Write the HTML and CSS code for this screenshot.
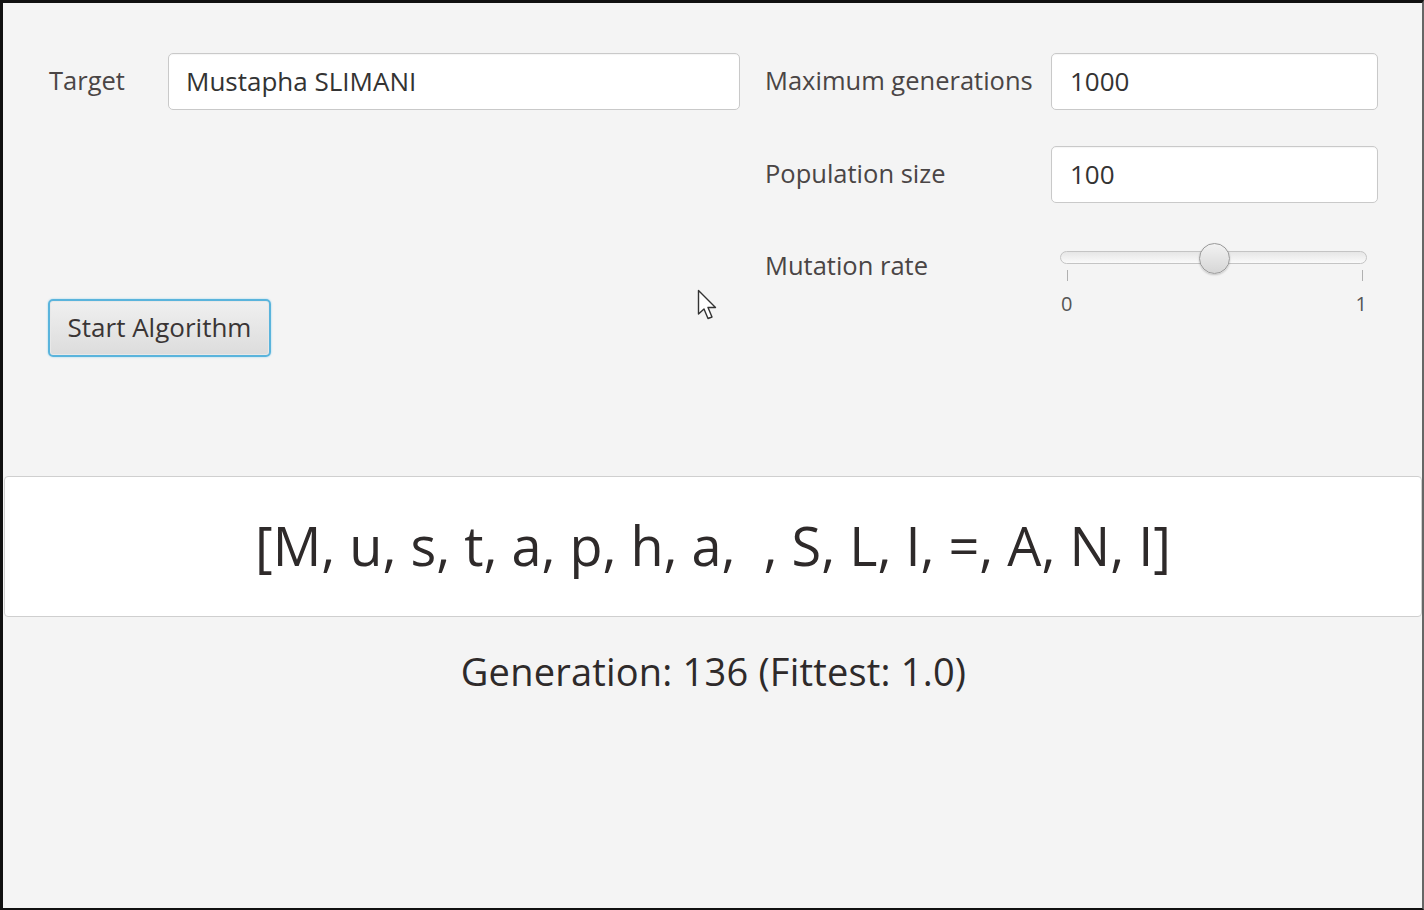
FILE: index.html
```html
<!DOCTYPE html>
<html lang="en">
<head>
<meta charset="utf-8">
<title>Genetic Algorithm</title>
<link rel="stylesheet" href="styles.css">
</head>
<body>
<div class="frame">
  <div class="top">
    <div class="left">
      <div class="row">
        <span class="label target-label">Target</span>
        <div class="field target-field">Mustapha SLIMANI</div>
      </div>
      <button class="start-btn">Start Algorithm</button>
    </div>
    <div class="right">
      <div class="rrow">
        <span class="label rlabel">Maximum generations</span>
        <div class="field rfield">1000</div>
      </div>
      <div class="rrow">
        <span class="label rlabel">Population size</span>
        <div class="field rfield">100</div>
      </div>
      <div class="rrow slider-row">
        <span class="label rlabel mut-label">Mutation rate</span>
        <div class="slider">
          <div class="track"><div class="thumb"></div></div>
          <div class="ticks"><span class="tick"></span><span class="tick"></span></div>
          <div class="tick-labels"><span>0</span><span>1</span></div>
        </div>
      </div>
    </div>
  </div>
  <div class="output">[M, u, s, t, a, p, h, a, &nbsp;, S, L, I, =, A, N, I]</div>
  <div class="generation">Generation: 136 (Fittest: 1.0)</div>
  <svg class="cursor" width="24" height="36" viewBox="0 0 24 36">
    <path d="M1.5 1.5 L1.5 25 L7 20 L11 29.5 L15 28 L11 18.5 L18.5 18.5 Z" fill="#fff" stroke="#333" stroke-width="1.4" stroke-linejoin="round"/>
  </svg>
</div>
</body>
</html>
```
FILE: styles.css
```css
* { box-sizing: border-box; }
html, body {
  margin: 0;
  padding: 0;
  background: #111;
}
.frame {
  position: relative;
  width: 1424px;
  height: 910px;
  background: #f4f4f4;
  border-top: 3px solid #111;
  border-left: 3px solid #111;
  border-right: 2px solid #666;
  border-bottom: 2px solid #111;
  font-family: "Open Sans", "Noto Sans", sans-serif;
  color: #333;
  overflow: hidden;
}
.top {
  display: flex;
  padding: 50px 0 0 46px;
  height: 473px;
}
.left {
  display: flex;
  flex-direction: column;
  align-items: flex-start;
  width: 716px;
}
.row {
  display: flex;
  align-items: center;
  height: 57px;
}
.label {
  font-size: 25.5px;
  color: #4a4545;
  padding-bottom: 3px;
}
.target-label {
  width: 119px;
}
.field {
  background: #fff;
  border: 1px solid #c9c9c9;
  border-radius: 5px;
  height: 57px;
  display: flex;
  align-items: center;
  padding-left: 17px;
  padding-bottom: 2px;
  font-size: 26px;
  color: #333;
  box-shadow: inset 0 1px 1px rgba(0,0,0,0.04);
}
.target-field {
  width: 572px;
}
.start-btn {
  margin-top: 189px;
  margin-left: -1px;
  width: 223px;
  height: 58px;
  border: 2px solid #5ab4dc;
  border-radius: 5px;
  background: linear-gradient(#f0f0f0, #dcdcdc);
  box-shadow: 0 0 2px #8fd0ec, inset 0 0 0 1px #e8e8e8;
  font-family: "Open Sans", "Noto Sans", sans-serif;
  font-size: 26px;
  color: #3a3535;
  padding: 0 0 2px 0;
}
.right {
  display: flex;
  flex-direction: column;
  gap: 36px;
}
.rrow {
  display: flex;
  align-items: center;
  height: 57px;
}
.rlabel {
  width: 286px;
}
.rfield {
  width: 327px;
  padding-left: 18px;
}
.slider-row {
  align-items: flex-start;
  margin-top: 4px;
}
.mut-label {
  margin-top: 5px;
}
.slider {
  width: 327px;
  padding: 0 11px 0 9px;
  display: flex;
  flex-direction: column;
}
.track {
  position: relative;
  height: 13px;
  border: 1px solid #c4c4c4;
  border-radius: 7px;
  background: linear-gradient(#e6e6e6, #fafafa);
  margin-top: 8px;
}
.thumb {
  position: absolute;
  left: 138px;
  top: -9px;
  width: 31px;
  height: 31px;
  border-radius: 50%;
  border: 1px solid #9a9a9a;
  background: linear-gradient(#f2f2f2, #d6d6d6);
  box-shadow: 0 1px 2px rgba(0,0,0,0.2);
}
.ticks {
  display: flex;
  justify-content: space-between;
  padding: 0 4px 0 7px;
  margin-top: 6px;
}
.tick {
  width: 1px;
  height: 11px;
  background: #b0b0b0;
}
.tick-labels {
  display: flex;
  justify-content: space-between;
  padding: 0 0 0 1px;
  margin-top: 11px;
  font-size: 20px;
  line-height: 24px;
  color: #555;
}
.output {
  margin-left: 1px;
  height: 141px;
  background: #fff;
  border: 1px solid #cfcfcf;
  border-radius: 4px;
  display: flex;
  align-items: center;
  justify-content: center;
  padding-bottom: 4px;
  font-size: 54px;
  color: #2e2a2a;
  white-space: pre;
}
.generation {
  text-align: center;
  font-size: 38px;
  color: #2e2a2a;
  letter-spacing: 0.2px;
  margin-top: 28px;
  padding-left: 2px;
}
.cursor {
  position: absolute;
  left: 694px;
  top: 286px;
}
```
